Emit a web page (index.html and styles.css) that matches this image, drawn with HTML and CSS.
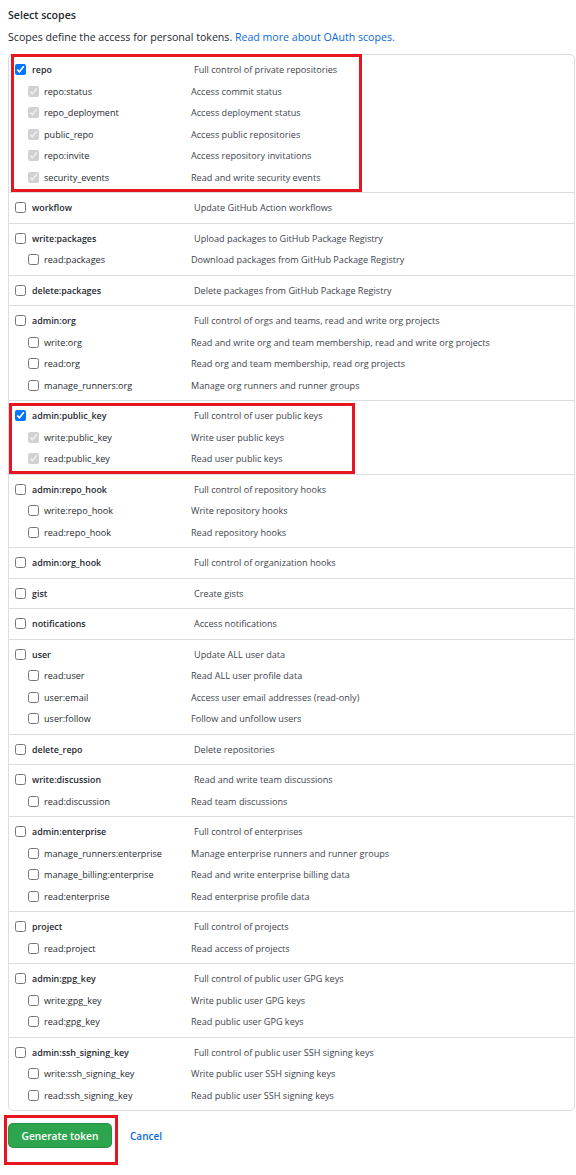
FILE: index.html
```html
<!DOCTYPE html>
<html lang="en">
<head>
<meta charset="utf-8">
<title>Select scopes</title>
<link rel="stylesheet" href="styles.css">
</head>
<body>
<div class="page">
  <h3 class="title">Select scopes</h3>
  <p class="note">Scopes define the access for personal tokens. <a href="#">Read more about OAuth scopes.</a></p>

  <div class="scopes">
    <div class="group">
      <div class="row main"><input type="checkbox" checked><span class="name">repo</span><span class="desc">Full control of private repositories</span></div>
      <div class="row sub"><input type="checkbox" checked disabled><span class="name">repo:status</span><span class="desc">Access commit status</span></div>
      <div class="row sub"><input type="checkbox" checked disabled><span class="name">repo_deployment</span><span class="desc">Access deployment status</span></div>
      <div class="row sub"><input type="checkbox" checked disabled><span class="name">public_repo</span><span class="desc">Access public repositories</span></div>
      <div class="row sub"><input type="checkbox" checked disabled><span class="name">repo:invite</span><span class="desc">Access repository invitations</span></div>
      <div class="row sub"><input type="checkbox" checked disabled><span class="name">security_events</span><span class="desc">Read and write security events</span></div>
      <div class="mark mark-repo"></div>
    </div>

    <div class="group">
      <div class="row main"><input type="checkbox"><span class="name">workflow</span><span class="desc">Update GitHub Action workflows</span></div>
    </div>

    <div class="group">
      <div class="row main"><input type="checkbox"><span class="name">write:packages</span><span class="desc">Upload packages to GitHub Package Registry</span></div>
      <div class="row sub"><input type="checkbox"><span class="name">read:packages</span><span class="desc">Download packages from GitHub Package Registry</span></div>
    </div>

    <div class="group">
      <div class="row main"><input type="checkbox"><span class="name">delete:packages</span><span class="desc">Delete packages from GitHub Package Registry</span></div>
    </div>

    <div class="group">
      <div class="row main"><input type="checkbox"><span class="name">admin:org</span><span class="desc">Full control of orgs and teams, read and write org projects</span></div>
      <div class="row sub"><input type="checkbox"><span class="name">write:org</span><span class="desc">Read and write org and team membership, read and write org projects</span></div>
      <div class="row sub"><input type="checkbox"><span class="name">read:org</span><span class="desc">Read org and team membership, read org projects</span></div>
      <div class="row sub"><input type="checkbox"><span class="name">manage_runners:org</span><span class="desc">Manage org runners and runner groups</span></div>
    </div>

    <div class="group">
      <div class="row main"><input type="checkbox" checked><span class="name">admin:public_key</span><span class="desc">Full control of user public keys</span></div>
      <div class="row sub"><input type="checkbox" checked disabled><span class="name">write:public_key</span><span class="desc">Write user public keys</span></div>
      <div class="row sub"><input type="checkbox" checked disabled><span class="name">read:public_key</span><span class="desc">Read user public keys</span></div>
      <div class="mark mark-key"></div>
    </div>

    <div class="group">
      <div class="row main"><input type="checkbox"><span class="name">admin:repo_hook</span><span class="desc">Full control of repository hooks</span></div>
      <div class="row sub"><input type="checkbox"><span class="name">write:repo_hook</span><span class="desc">Write repository hooks</span></div>
      <div class="row sub"><input type="checkbox"><span class="name">read:repo_hook</span><span class="desc">Read repository hooks</span></div>
    </div>

    <div class="group">
      <div class="row main"><input type="checkbox"><span class="name">admin:org_hook</span><span class="desc">Full control of organization hooks</span></div>
    </div>

    <div class="group">
      <div class="row main"><input type="checkbox"><span class="name">gist</span><span class="desc">Create gists</span></div>
    </div>

    <div class="group">
      <div class="row main"><input type="checkbox"><span class="name">notifications</span><span class="desc">Access notifications</span></div>
    </div>

    <div class="group">
      <div class="row main"><input type="checkbox"><span class="name">user</span><span class="desc">Update ALL user data</span></div>
      <div class="row sub"><input type="checkbox"><span class="name">read:user</span><span class="desc">Read ALL user profile data</span></div>
      <div class="row sub"><input type="checkbox"><span class="name">user:email</span><span class="desc">Access user email addresses (read-only)</span></div>
      <div class="row sub"><input type="checkbox"><span class="name">user:follow</span><span class="desc">Follow and unfollow users</span></div>
    </div>

    <div class="group">
      <div class="row main"><input type="checkbox"><span class="name">delete_repo</span><span class="desc">Delete repositories</span></div>
    </div>

    <div class="group">
      <div class="row main"><input type="checkbox"><span class="name">write:discussion</span><span class="desc">Read and write team discussions</span></div>
      <div class="row sub"><input type="checkbox"><span class="name">read:discussion</span><span class="desc">Read team discussions</span></div>
    </div>

    <div class="group">
      <div class="row main"><input type="checkbox"><span class="name">admin:enterprise</span><span class="desc">Full control of enterprises</span></div>
      <div class="row sub"><input type="checkbox"><span class="name">manage_runners:enterprise</span><span class="desc">Manage enterprise runners and runner groups</span></div>
      <div class="row sub"><input type="checkbox"><span class="name">manage_billing:enterprise</span><span class="desc">Read and write enterprise billing data</span></div>
      <div class="row sub"><input type="checkbox"><span class="name">read:enterprise</span><span class="desc">Read enterprise profile data</span></div>
    </div>

    <div class="group">
      <div class="row main"><input type="checkbox"><span class="name">project</span><span class="desc">Full control of projects</span></div>
      <div class="row sub"><input type="checkbox"><span class="name">read:project</span><span class="desc">Read access of projects</span></div>
    </div>

    <div class="group">
      <div class="row main"><input type="checkbox"><span class="name">admin:gpg_key</span><span class="desc">Full control of public user GPG keys</span></div>
      <div class="row sub"><input type="checkbox"><span class="name">write:gpg_key</span><span class="desc">Write public user GPG keys</span></div>
      <div class="row sub"><input type="checkbox"><span class="name">read:gpg_key</span><span class="desc">Read public user GPG keys</span></div>
    </div>

    <div class="group">
      <div class="row main"><input type="checkbox"><span class="name">admin:ssh_signing_key</span><span class="desc">Full control of public user SSH signing keys</span></div>
      <div class="row sub"><input type="checkbox"><span class="name">write:ssh_signing_key</span><span class="desc">Write public user SSH signing keys</span></div>
      <div class="row sub"><input type="checkbox"><span class="name">read:ssh_signing_key</span><span class="desc">Read public user SSH signing keys</span></div>
    </div>
  </div>

  <div class="actions">
    <div class="btn-wrap">
      <button class="btn-primary" type="button">Generate token</button>
      <div class="mark mark-btn"></div>
    </div>
    <a class="cancel" href="#">Cancel</a>
  </div>
</div>
</body>
</html>
```

FILE: styles.css
```css
html, body {
  margin: 0;
  padding: 0;
  background: #ffffff;
}

body {
  font-family: "Open Sans", "Noto Sans", "Liberation Sans", sans-serif;
  color: #24292f;
}

.page {
  padding: 7px 1px 28px 8px;
}

.title {
  margin: 0;
  font-size: 10.6px;
  line-height: 16px;
  font-weight: 600;
}

.note {
  margin: 6px 0 0;
  font-size: 10.6px;
  line-height: 16px;
  color: #24292f;
}

.note a {
  color: #0969da;
  text-decoration: none;
}

.scopes {
  margin-top: 9px;
  border: 1px solid #d8dee4;
  border-radius: 5px;
}

.group {
  position: relative;
  padding: 4px 0;
  border-top: 1px solid #d8dee4;
}

.group:first-child {
  border-top: 0;
}

.row {
  display: grid;
  align-items: center;
  height: 21.5px;
  font-size: 9.1px;
}

.row input {
  width: 11px;
  height: 11px;
  margin: 0;
}

.row.main {
  grid-template-columns: 11px 168px 1fr;
  padding-left: 6px;
}

.row.main .name {
  padding-left: 6px;
  font-weight: 600;
  font-size: 8.9px;
}

.row.sub {
  grid-template-columns: 11px 152px 1fr;
  padding-left: 19px;
}

.row.sub .name {
  padding-left: 5px;
}

.desc {
  color: #3d444d;
  white-space: nowrap;
}

.mark {
  position: absolute;
  z-index: 1;
  border: 3px solid #e8141f;
  box-sizing: border-box;
  pointer-events: none;
}

.mark-repo {
  left: 2px;
  top: -1px;
  width: 351px;
  height: 138px;
}

.mark-key {
  left: 0;
  top: 2px;
  width: 346px;
  height: 71px;
}

.actions {
  display: flex;
  align-items: center;
  gap: 18px;
  margin-top: 12px;
}

.btn-wrap {
  position: relative;
}

.btn-primary {
  display: block;
  width: 104px;
  height: 25px;
  border: 1px solid rgba(27, 31, 36, 0.15);
  border-radius: 5px;
  background: #2da44e;
  color: #ffffff;
  font-family: inherit;
  font-size: 10.2px;
  font-weight: 600;
  padding: 0;
}

.mark-btn {
  left: -4px;
  top: -8px;
  width: 114px;
  height: 50px;
}

.cancel {
  color: #0969da;
  font-size: 10px;
  font-weight: 600;
  text-decoration: none;
}
```
